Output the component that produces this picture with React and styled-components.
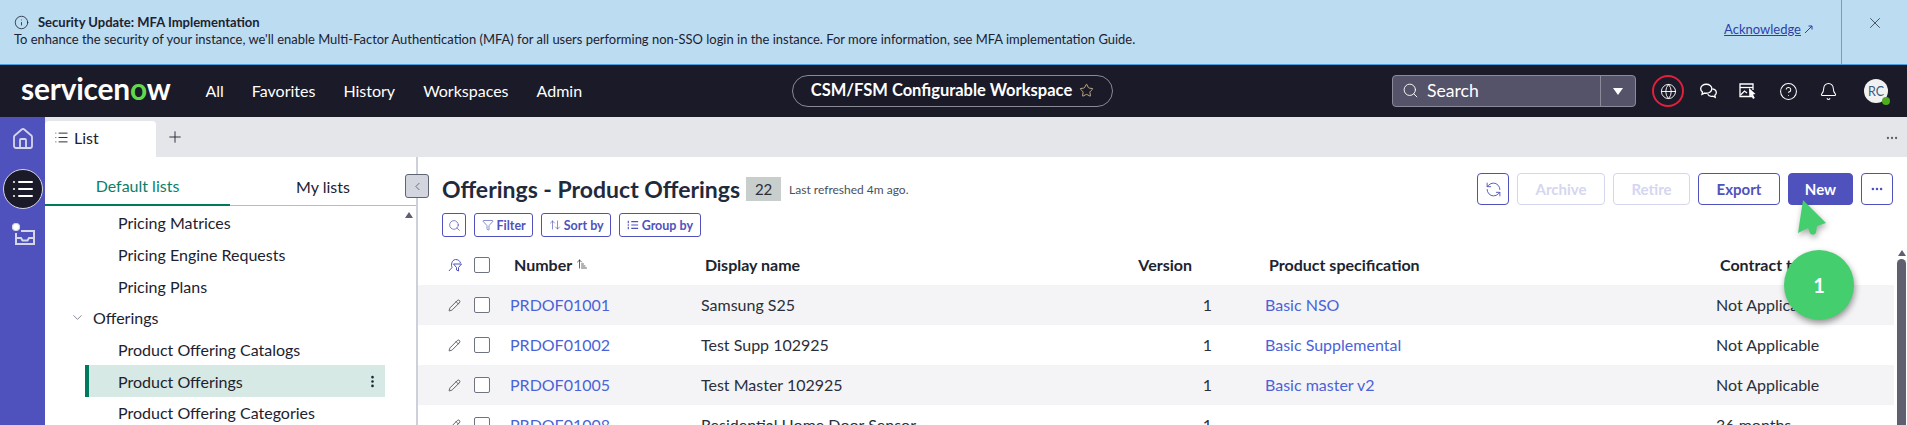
import React from "react";
import styled, { createGlobalStyle } from "styled-components";
import {
  Info,
  X,
  Search,
  Globe,
  Star,
  CircleHelp,
  Bell,
  House,
  List,
  Plus,
  ChevronLeft,
  ChevronDown,
  EllipsisVertical,
  Ellipsis,
  RefreshCcw,
  Funnel,
  ArrowUpDown,
  Pencil,
  ArrowUpNarrowWide,
} from "lucide-react";

const GlobalStyle = createGlobalStyle`
  html, body {
    margin: 0;
    padding: 0;
    overflow: hidden;
    background: #fff;
  }
  body, button {
    font-family: Lato, "Noto Sans", sans-serif;
  }
  * { box-sizing: border-box; }
`;

const Page = styled.div`
  height: 425px;
  display: flex;
  flex-direction: column;
  overflow: hidden;
  position: relative;
`;

const Banner = styled.div`
  height: 65px;
  flex: none;
  display: flex;
  background: #bbdcf1;
  border-bottom: 1px solid #4a9fe0;
  color: #1d2230;
`;

const BannerText = styled.div`
  flex: 1;
  padding: 14px 0 0 14px;
`;

const BannerTitle = styled.div`
  display: flex;
  align-items: center;
  gap: 9px;
  font-size: 13px;
  font-weight: 700;
  line-height: 17px;
`;

const BannerBody = styled.div`
  font-size: 12.96px;
  line-height: 16px;
  white-space: nowrap;
`;

const Ack = styled.a`
  align-self: flex-start;
  margin: 21px 28px 0 0;
  font-size: 13px;
  line-height: 16px;
  color: #2d3fa8;
  text-decoration: underline;
  display: flex;
  align-items: center;
  gap: 3px;
`;

const BannerClose = styled.div`
  width: 66px;
  border-left: 1px solid #5aa7e0;
  display: flex;
  justify-content: center;
  padding-top: 14px;
  color: #3d4757;
`;

const NavBar = styled.div`
  height: 52px;
  flex: none;
  background: #1a1a28;
  display: grid;
  grid-template-columns: 771px auto 1fr;
  align-items: center;
  color: #fff;
  padding-left: 21px;
`;

const NavLeft = styled.div`
  display: flex;
  align-items: center;
`;

const Logo = styled.div`
  font-size: 29.9px;
  font-weight: 700;
  line-height: 32px;
  letter-spacing: -0.2px;
  margin: -6px 35px 0 0;
  span { color: #62d84e; }
`;

const NavLinks = styled.div`
  display: flex;
  gap: 28px;
  font-size: 16px;
  padding-bottom: 2px;
`;

const Pill = styled.div`
  width: 321px;
  height: 32px;
  border: 1px solid #8a8a94;
  border-radius: 16px;
  display: flex;
  align-items: center;
  justify-content: center;
  gap: 7px;
  padding-bottom: 2px;
  font-size: 16.5px;
  font-weight: 700;
  svg { color: #e3c98f; }
`;

const NavRight = styled.div`
  display: flex;
  align-items: center;
  justify-content: flex-end;
`;

const SearchBox = styled.div`
  width: 244px;
  height: 32px;
  background: #55536a;
  border: 1px solid #8b8a98;
  border-radius: 4px;
  display: flex;
  align-items: center;
  margin-right: 16px;
`;

const SearchLabel = styled.div`
  flex: 1;
  display: flex;
  align-items: center;
  gap: 8px;
  padding: 0 0 2px 9px;
  font-size: 17.6px;
`;

const SearchCaret = styled.div`
  width: 35px;
  height: 100%;
  border-left: 1px solid #8b8a98;
  display: flex;
  align-items: center;
  justify-content: center;
  &::after {
    content: "";
    border-left: 5.5px solid transparent;
    border-right: 5.5px solid transparent;
    border-top: 7px solid #fff;
  }
`;

const IconSlot = styled.div`
  width: 40px;
  height: 32px;
  display: flex;
  align-items: center;
  justify-content: center;
`;

const GlobeRing = styled.div`
  width: 32px;
  height: 32px;
  margin-right: 4px;
  border: 2px solid #e0203c;
  border-radius: 50%;
  display: flex;
  align-items: center;
  justify-content: center;
`;

const Avatar = styled.div`
  width: 24px;
  height: 24px;
  border-radius: 50%;
  background: #f1f1f1;
  color: #3d5a80;
  font-size: 12.5px;
  display: flex;
  align-items: center;
  justify-content: center;
  position: relative;
  margin: 0 19px 0 16px;
  &::after {
    content: "";
    position: absolute;
    right: -2px;
    bottom: -2px;
    width: 8px;
    height: 8px;
    border-radius: 50%;
    background: #4fae1f;
  }
`;

const Body = styled.div`
  flex: 1;
  display: flex;
  min-height: 0;
`;

const Rail = styled.div`
  width: 45px;
  flex: none;
  background: #4f52bd;
  display: flex;
  flex-direction: column;
  align-items: center;
  padding-top: 10px;
  color: #d5d6e8;
`;

const RailActive = styled.div`
  width: 40px;
  height: 40px;
  margin: 18px 0 12px;
  border-radius: 50%;
  background: #1a1a28;
  border: 1px solid #d5d6e8;
  color: #fff;
  display: flex;
  align-items: center;
  justify-content: center;
`;

const Main = styled.div`
  flex: 1;
  min-width: 0;
  display: flex;
  flex-direction: column;
  position: relative;
`;

const TabBar = styled.div`
  height: 40px;
  flex: none;
  background: #e4e6ea;
  display: flex;
  align-items: flex-end;
  color: #1d2230;
`;

const ActiveTab = styled.div`
  width: 111px;
  height: 36px;
  background: #fff;
  border-radius: 4px 4px 0 0;
  display: flex;
  align-items: center;
  gap: 5px;
  padding: 0 0 4px 9px;
  font-size: 16px;
`;

const AddTab = styled.div`
  height: 36px;
  margin-left: 10px;
  padding-bottom: 4px;
  display: flex;
  align-items: center;
`;

const TabMore = styled.div`
  margin-left: auto;
  height: 36px;
  padding: 0 8px 2px 0;
  display: flex;
  align-items: center;
  color: #5f5f70;
`;

const Panels = styled.div`
  flex: 1;
  min-height: 0;
  display: flex;
`;

const Sidebar = styled.div`
  width: 373px;
  flex: none;
  border-right: 2px solid #cdd0d8;
  display: flex;
  flex-direction: column;
  position: relative;
`;

const SideTabs = styled.div`
  height: 49px;
  flex: none;
  display: flex;
  border-bottom: 1px solid #b9bcc6;
`;

const SideTab = styled.div`
  width: ${(p) => (p.$active ? 185 : 186)}px;
  height: ${(p) => (p.$active ? 49 : 48)}px;
  display: flex;
  align-items: center;
  justify-content: center;
  padding-top: 10px;
  font-size: 16px;
  color: ${(p) => (p.$active ? "#0a7f6b" : "#1d2230")};
  border-bottom: ${(p) => (p.$active ? "2px solid #007a5e" : "none")};
`;

const Tree = styled.div`
  padding-top: 1px;
`;

const TreeRow = styled.div`
  height: 31.7px;
  margin: 0 31px 0 ${(p) => (p.$group ? 25 : 40)}px;
  display: flex;
  align-items: center;
  padding-left: ${(p) => (p.$group ? 0 : 33)}px;
  font-size: 16px;
  color: #1d2230;
  background: ${(p) => (p.$selected ? "#d7e9e4" : "transparent")};
  box-shadow: ${(p) => (p.$selected ? "inset 4px 0 0 #007a5e" : "none")};
  svg { color: #5f6472; }
`;

const GroupLabel = styled.span`
  margin-left: 8px;
`;

const RowMenu = styled.span`
  margin-left: auto;
  padding-right: 5px;
  display: flex;
  svg { color: #1d2230; }
`;

const SideArrow = styled.div`
  position: absolute;
  right: 3px;
  top: 55px;
  border-left: 4px solid transparent;
  border-right: 4px solid transparent;
  border-bottom: 6px solid #5f5f70;
`;

const Collapse = styled.div`
  position: absolute;
  left: 360px;
  top: 57px;
  width: 24px;
  height: 24px;
  background: #d3d6de;
  border: 1px solid #5f6472;
  border-radius: 3px;
  display: flex;
  align-items: center;
  justify-content: center;
  color: #4a4f5c;
`;

const Content = styled.div`
  flex: 1;
  min-width: 0;
  display: flex;
  flex-direction: column;
  padding-top: 16px;
`;

const TitleRow = styled.div`
  display: flex;
  align-items: center;
  height: 32px;
  padding: 0 14px 0 24px;
`;

const Title = styled.h1`
  margin: 0;
  font-size: 23px;
  font-weight: 700;
  color: #1f2a3c;
  white-space: nowrap;
`;

const Count = styled.span`
  margin-left: 6px;
  width: 35px;
  height: 24px;
  background: #c8cecc;
  display: flex;
  align-items: center;
  justify-content: center;
  font-size: 15px;
  color: #2a2f3a;
`;

const Refreshed = styled.span`
  margin-left: 8px;
  font-size: 12px;
  color: #4a4f5c;
`;

const Actions = styled.div`
  margin-left: auto;
  display: flex;
  gap: 8px;
`;

const Btn = styled.button`
  height: 32px;
  width: ${(p) => p.$w || 32}px;
  padding: 0;
  border-radius: 4px;
  font-size: 15px;
  font-weight: 700;
  display: flex;
  align-items: center;
  justify-content: center;
  background: ${(p) => (p.$primary ? "#4f52bd" : "#fff")};
  color: ${(p) => (p.$primary ? "#fff" : p.$disabled ? "#d5d6f0" : "#4f52bd")};
  border: 1px solid ${(p) => (p.$disabled ? "#d5d6f0" : "#4f52bd")};
`;

const FilterRow = styled.div`
  display: flex;
  gap: 8px;
  padding-left: 24px;
  margin-top: 8px;
`;

const Chip = styled.button`
  height: 24px;
  min-width: 24px;
  padding: ${(p) => (p.$icon ? "0" : "0 6.5px")};
  border: 1px solid #4f52bd;
  border-radius: 3px;
  background: #fff;
  color: #4f52bd;
  font-size: 12.5px;
  font-weight: 700;
  display: flex;
  align-items: center;
  justify-content: center;
  gap: 3px;
`;

const TableArea = styled.div`
  flex: 1;
  min-height: 0;
  margin-top: 8px;
  display: flex;
`;

const Table = styled.div`
  flex: 1;
  min-width: 0;
`;

const Row = styled.div`
  height: 40px;
  display: grid;
  grid-template-columns: 56px 36px 191px 300px 211px 504px 1fr;
  align-items: center;
  font-size: 16px;
  color: #2a2f3a;
  background: ${(p) => (p.$shade ? "#f4f4f6" : "#fff")};
`;

const HeadCell = styled.div`
  font-weight: 700;
  color: #20242e;
  font-size: 16px;
  padding: 0 ${(p) => p.$padR || 0}px 2px ${(p) => p.$pad || 4}px;
  display: flex;
  align-items: center;
  justify-content: ${(p) => (p.$right ? "flex-end" : "flex-start")};
  gap: 4px;
  white-space: nowrap;
`;

const ToolCell = styled.div`
  display: flex;
  padding-left: 30px;
  color: #3d414d;
`;

const Check = styled.span`
  display: block;
  width: 16px;
  height: 16px;
  border: 1px solid #6f7483;
  border-radius: 2px;
  background: #fff;
`;

const Cell = styled.div`
  text-align: ${(p) => (p.$right ? "right" : "left")};
  padding: 0 0 2px ${(p) => p.$pad || 0}px;
  white-space: nowrap;
`;

const RecLink = styled.a`
  color: #4a63d8;
`;

const ScrollTrack = styled.div`
  width: 13px;
  flex: none;
  padding: 5px 1px 0 3px;
  display: flex;
  flex-direction: column;
  align-items: center;
  &::before {
    content: "";
    border-left: 4px solid transparent;
    border-right: 4px solid transparent;
    border-bottom: 6px solid #5f5f70;
    margin-bottom: 3px;
  }
`;

const ScrollThumb = styled.div`
  width: 9px;
  flex: 1;
  background: #5f5f70;
  border-radius: 5px 5px 0 0;
`;

const Callout = styled.svg`
  position: absolute;
  left: 1795px;
  top: 198px;
  filter: drop-shadow(1px 3px 3px rgba(0, 0, 0, 0.35));
`;

const StepBadge = styled.div`
  position: absolute;
  left: 1784px;
  top: 250px;
  width: 70px;
  height: 70px;
  border-radius: 50%;
  background: #45ce6d;
  color: #fff;
  font-size: 20px;
  font-weight: 700;
  display: flex;
  align-items: center;
  justify-content: center;
  box-shadow: 1px 3px 6px rgba(0, 0, 0, 0.4);
`;

const ChatIcon = () => (
  <svg width="19" height="19" viewBox="0 0 17 17" fill="none" stroke="#fff" strokeWidth="1.2">
    <path d="M6.5 2C3.8 2 1.5 3.8 1.5 6c0 1.2.6 2.2 1.6 3l-.4 2 2.3-1.1c.5.1 1 .2 1.5.2 2.7 0 5-1.8 5-4.1S9.2 2 6.5 2Z" />
    <path d="M12 6.2c1.9.3 3.5 1.6 3.5 3.3 0 1-.5 1.8-1.3 2.4l.3 1.8-2-1c-1.6.4-3.9-.2-4.7-1.7" />
  </svg>
);

const ImageCursorIcon = () => (
  <svg width="20" height="18" viewBox="0 0 20 18" fill="none" stroke="#fff" strokeWidth="1.3">
    <path d="M15 14.5H2V2h13v6" />
    <path d="M2 5.5h13" />
    <path d="M2.5 13l4-4 2.5 2" />
    <path d="M11 6l6.5 6-2.5.6 1.8 3.4-1.8.9-1.7-3.4-2 1.5Z" fill="#fff" stroke="none" />
  </svg>
);

const InboxIcon = () => (
  <svg width="26" height="26" viewBox="0 0 26 26" fill="none" stroke="#d5d6e8" strokeWidth="2">
    <circle cx="6" cy="6" r="3.5" fill="#fff" stroke="#d5d6e8" strokeWidth="1.2" />
    <path d="M6 12v11h18V10H11" />
    <path d="M6 17h5l1.5 2.5h5L19 17h5" />
  </svg>
);

const PersonalizeIcon = () => (
  <svg width="14" height="14" viewBox="0 0 14 14" fill="none" stroke="#4f52bd" strokeWidth="1">
    <path d="M1 13c1-1.5 2.5-2.5 3-3.5C3 7 3.5 2 7.5 1.5 10 1.3 12 3 12.5 5" />
    <path d="M5.5 6h8l-3 3.5V13l-2-1V9.5Z" />
  </svg>
);

const GroupIcon = () => (
  <svg width="12" height="12" viewBox="0 0 14 14" fill="none" stroke="#4f52bd" strokeWidth="1.3">
    <path d="M5 3h8M5 7h8M5 11h8M1.5 2v3M1.5 6v2M1.5 9v3" />
  </svg>
);

const ExternalIcon = () => (
  <svg width="9" height="9" viewBox="0 0 9 9" fill="none" stroke="#2d3fa8" strokeWidth="1">
    <path d="M1 8l7-7M4.5 1H8v3.5" />
  </svg>
);

const treeItems = [
  { label: "Pricing Matrices" },
  { label: "Pricing Engine Requests" },
  { label: "Pricing Plans" },
  { label: "Offerings", group: true },
  { label: "Product Offering Catalogs" },
  { label: "Product Offerings", selected: true },
  { label: "Product Offering Categories" },
];

const records = [
  { num: "PRDOF01001", name: "Samsung S25", version: "1", spec: "Basic NSO", term: "Not Applicable" },
  { num: "PRDOF01002", name: "Test Supp 102925", version: "1", spec: "Basic Supplemental", term: "Not Applicable" },
  { num: "PRDOF01005", name: "Test Master 102925", version: "1", spec: "Basic master v2", term: "Not Applicable" },
  { num: "PRDOF01008", name: "Residential Home Door Sensor", version: "1", spec: "", term: "36 months" },
];

export default function App() {
  return (
    <Page>
      <GlobalStyle />
      <Banner>
        <BannerText>
          <BannerTitle>
            <Info size={15} strokeWidth={1.3} />
            Security Update: MFA Implementation
          </BannerTitle>
          <BannerBody>
            To enhance the security of your instance, we'll enable Multi-Factor Authentication (MFA) for all users
            performing non-SSO login in the instance. For more information, see MFA implementation Guide.
          </BannerBody>
        </BannerText>
        <Ack>
          Acknowledge
          <ExternalIcon />
        </Ack>
        <BannerClose>
          <X size={18} strokeWidth={1.2} />
        </BannerClose>
      </Banner>

      <NavBar>
        <NavLeft>
          <Logo>
            servicen<span>o</span>w
          </Logo>
          <NavLinks>
            <span>All</span>
            <span>Favorites</span>
            <span>History</span>
            <span>Workspaces</span>
            <span>Admin</span>
          </NavLinks>
        </NavLeft>
        <Pill>
          CSM/FSM Configurable Workspace
          <Star size={15} strokeWidth={1.3} />
        </Pill>
        <NavRight>
          <SearchBox>
            <SearchLabel>
              <Search size={17} strokeWidth={1.3} />
              Search
            </SearchLabel>
            <SearchCaret />
          </SearchBox>
          <GlobeRing>
            <Globe size={17} strokeWidth={1.3} />
          </GlobeRing>
          <IconSlot>
            <ChatIcon />
          </IconSlot>
          <IconSlot>
            <ImageCursorIcon />
          </IconSlot>
          <IconSlot>
            <CircleHelp size={19} strokeWidth={1.3} />
          </IconSlot>
          <IconSlot>
            <Bell size={19} strokeWidth={1.3} />
          </IconSlot>
          <Avatar>RC</Avatar>
        </NavRight>
      </NavBar>

      <Body>
        <Rail>
          <House size={24} strokeWidth={1.8} />
          <RailActive>
            <List size={24} strokeWidth={2} />
          </RailActive>
          <InboxIcon />
        </Rail>
        <Main>
          <TabBar>
            <ActiveTab>
              <List size={15} strokeWidth={1.5} />
              List
            </ActiveTab>
            <AddTab>
              <Plus size={18} strokeWidth={1.2} />
            </AddTab>
            <TabMore>
              <Ellipsis size={14} />
            </TabMore>
          </TabBar>
          <Panels>
            <Sidebar>
              <SideTabs>
                <SideTab $active>Default lists</SideTab>
                <SideTab>My lists</SideTab>
              </SideTabs>
              <SideArrow />
              <Tree>
                {treeItems.map((item) => (
                  <TreeRow key={item.label} $group={item.group} $selected={item.selected}>
                    {item.group && <ChevronDown size={15} strokeWidth={1.2} />}
                    {item.group ? <GroupLabel>{item.label}</GroupLabel> : item.label}
                    {item.selected && (
                      <RowMenu>
                        <EllipsisVertical size={15} strokeWidth={2.2} />
                      </RowMenu>
                    )}
                  </TreeRow>
                ))}
              </Tree>
            </Sidebar>
            <Content>
              <TitleRow>
                <Title>Offerings - Product Offerings</Title>
                <Count>22</Count>
                <Refreshed>Last refreshed 4m ago.</Refreshed>
                <Actions>
                  <Btn>
                    <RefreshCcw size={17} strokeWidth={1.3} />
                  </Btn>
                  <Btn $disabled $w={88}>
                    Archive
                  </Btn>
                  <Btn $disabled $w={77}>
                    Retire
                  </Btn>
                  <Btn $w={82}>Export</Btn>
                  <Btn $primary $w={65}>
                    New
                  </Btn>
                  <Btn>
                    <Ellipsis size={14} strokeWidth={2.4} />
                  </Btn>
                </Actions>
              </TitleRow>
              <FilterRow>
                <Chip $icon>
                  <Search size={13} strokeWidth={1.3} />
                </Chip>
                <Chip>
                  <Funnel size={12} strokeWidth={1.3} />
                  Filter
                </Chip>
                <Chip>
                  <ArrowUpDown size={12} strokeWidth={1.3} />
                  Sort by
                </Chip>
                <Chip>
                  <GroupIcon />
                  Group by
                </Chip>
              </FilterRow>
              <TableArea>
                <Table>
                  <Row>
                    <ToolCell>
                      <PersonalizeIcon />
                    </ToolCell>
                    <Check />
                    <HeadCell>
                      Number
                      <ArrowUpNarrowWide size={12} strokeWidth={1.4} />
                    </HeadCell>
                    <HeadCell>Display name</HeadCell>
                    <HeadCell $right $padR={20}>
                      Version
                    </HeadCell>
                    <HeadCell $pad={57}>Product specification</HeadCell>
                    <HeadCell>Contract term</HeadCell>
                  </Row>
                  {records.map((rec, i) => (
                    <Row key={rec.num} $shade={i % 2 === 0}>
                      <ToolCell>
                        <Pencil size={13} strokeWidth={1.5} />
                      </ToolCell>
                      <Check />
                      <Cell>
                        <RecLink>{rec.num}</RecLink>
                      </Cell>
                      <Cell>{rec.name}</Cell>
                      <Cell $right>{rec.version}</Cell>
                      <Cell $pad={53}>
                        <RecLink>{rec.spec}</RecLink>
                      </Cell>
                      <Cell>{rec.term}</Cell>
                    </Row>
                  ))}
                </Table>
                <ScrollTrack>
                  <ScrollThumb />
                </ScrollTrack>
              </TableArea>
            </Content>
          </Panels>
          <Collapse>
            <ChevronLeft size={13} strokeWidth={1.4} />
          </Collapse>
        </Main>
      </Body>

      <Callout width="36" height="42" viewBox="0 0 36 42">
        <path d="M8 2L3 35l10-5 2 5c1.5 2.5 5 2 6-.5L22 28l9-3Z" fill="#45ce6d" />
      </Callout>
      <StepBadge>1</StepBadge>
    </Page>
  );
}
